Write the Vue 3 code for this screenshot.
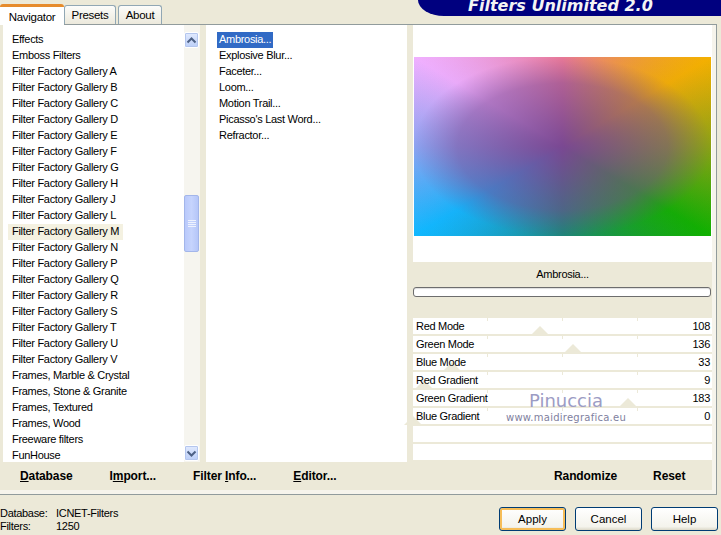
<script setup>
const filterCategories = [
  'Effects', 'Emboss Filters', 'Filter Factory Gallery A', 'Filter Factory Gallery B',
  'Filter Factory Gallery C', 'Filter Factory Gallery D', 'Filter Factory Gallery E',
  'Filter Factory Gallery F', 'Filter Factory Gallery G', 'Filter Factory Gallery H',
  'Filter Factory Gallery J', 'Filter Factory Gallery L', 'Filter Factory Gallery M',
  'Filter Factory Gallery N', 'Filter Factory Gallery P', 'Filter Factory Gallery Q',
  'Filter Factory Gallery R', 'Filter Factory Gallery S', 'Filter Factory Gallery T',
  'Filter Factory Gallery U', 'Filter Factory Gallery V', 'Frames, Marble & Crystal',
  'Frames, Stone & Granite', 'Frames, Textured', 'Frames, Wood', 'Freeware filters', 'FunHouse'
]
const filters = ['Ambrosia...', 'Explosive Blur...', 'Faceter...', 'Loom...', 'Motion Trail...', "Picasso's Last Word...", 'Refractor...']
const sliders = [
  { name: 'Red Mode', value: 108 },
  { name: 'Green Mode', value: 136 },
  { name: 'Blue Mode', value: 33 },
  { name: 'Red Gradient', value: 9 },
  { name: 'Green Gradient', value: 183 },
  { name: 'Blue Gradient', value: 0 }
]
const thumbLeft = (value) => `${value * 1.173 - 7}px`
</script>

<template>
  <div class="dialog">
    <header class="top">
      <div class="tabs">
        <div class="tab tab--active">Navigator</div>
        <div class="tab">Presets</div>
        <div class="tab">About</div>
      </div>
      <div class="brand">Filters Unlimited 2.0</div>
    </header>

    <section class="panel">
      <div class="columns">
        <div class="category-col">
          <ul class="list">
            <li v-for="item in filterCategories" :key="item" :class="['row', { 'row--current': item === 'Filter Factory Gallery M' }]">
              <span>{{ item }}</span>
            </li>
          </ul>
          <div class="scrollbar">
            <div class="arrow">
              <svg width="11" height="9" viewBox="0 0 11 9"><path d="M1.5 6.5 5.5 2.5 9.5 6.5" fill="none" stroke="#4d6185" stroke-width="2" /></svg>
            </div>
            <div class="scroll-track">
              <div class="scroll-thumb"><i></i><i></i><i></i><i></i></div>
            </div>
            <div class="arrow">
              <svg width="11" height="9" viewBox="0 0 11 9"><path d="M1.5 2.5 5.5 6.5 9.5 2.5" fill="none" stroke="#4d6185" stroke-width="2" /></svg>
            </div>
          </div>
        </div>
        <ul class="list filter-col">
          <li v-for="(item, index) in filters" :key="item" class="row">
            <span :class="{ selected: index === 0 }">{{ item }}</span>
          </li>
        </ul>
        <div class="preview-col">
          <div class="preview-gap"></div>
          <div class="preview"></div>
          <div class="preview-foot"></div>
          <div class="caption">
            <div class="caption-name">Ambrosia...</div>
            <div class="progress"></div>
          </div>
          <div class="sliders">
            <div v-for="slider in sliders" :key="slider.name" class="slider">
              <span>{{ slider.name }}</span>
              <span>{{ slider.value }}</span>
              <i class="tick tick-1"></i><i class="tick tick-2"></i><i class="tick tick-3"></i>
              <i class="thumb" :style="{ left: thumbLeft(slider.value) }"></i>
            </div>
            <div class="slider"></div>
            <div class="slider"></div>
            <div class="watermark">
              <div class="watermark-name">Pinuccia</div>
              <div class="watermark-url">www.maidiregrafica.eu</div>
            </div>
          </div>
        </div>
      </div>
      <div class="actions">
        <div class="actions-left">
          <span><u>D</u>atabase</span>
          <span>I<u>m</u>port...</span>
          <span>Filter <u>I</u>nfo...</span>
          <span><u>E</u>ditor...</span>
        </div>
        <div class="actions-right">
          <span>Randomize</span>
          <span>Reset</span>
        </div>
      </div>
    </section>

    <footer class="footer">
      <div class="status">
        <div><span class="status-key">Database:</span>ICNET-Filters</div>
        <div><span class="status-key">Filters:</span>1250</div>
      </div>
      <div class="buttons">
        <button class="btn btn--default" type="button">Apply</button>
        <button class="btn" type="button">Cancel</button>
        <button class="btn" type="button">Help</button>
      </div>
    </footer>
  </div>
</template>

<style scoped>
.dialog {
  width: 721px;
  height: 535px;
  overflow: hidden;
  color: #000;
  background: #ece9d8;
  font-family: "Liberation Sans", Arial, sans-serif;
  font-size: 11px;
  letter-spacing: -0.3px;
}
.top {
  display: flex;
  justify-content: space-between;
  height: 24px;
}
.tabs {
  display: flex;
  align-items: flex-end;
}
.tab {
  width: 50px;
  height: 18px;
  margin-right: 2px;
  line-height: 18px;
  text-align: center;
  font-size: 11.5px;
  background: linear-gradient(#fcfcfa, #ece9dc);
  border: 1px solid #91a7b4;
  border-bottom: none;
  border-radius: 3px 3px 0 0;
}
.tab:nth-child(3) { width: 42px; margin-right: 0; }
.tab--active {
  position: relative;
  z-index: 1;
  width: 64px;
  height: 18px;
  margin: 0 0 -1px;
  line-height: 20px;
  background: #fff;
  border: none;
  border-top: 3px solid #e68b2c;
}
.brand {
  width: 303px;
  height: 16px;
  padding-left: 50px;
  box-sizing: border-box;
  color: #f4f4f4;
  background: #00007f;
  border-bottom-left-radius: 26px 16px;
  font-family: "DejaVu Sans", sans-serif;
  font-size: 16px;
  font-weight: 700;
  font-style: italic;
  line-height: 12px;
  letter-spacing: 0;
  white-space: nowrap;
}
.panel {
  display: flex;
  flex-direction: column;
  width: 717px;
  height: 471px;
  box-sizing: border-box;
  padding: 0 4px 4px 0;
  background: #f6f4ec;
  border: 1px solid #919b9c;
  border-left: none;
}
.columns {
  display: flex;
  height: 437px;
  background: #ece9d8;
}
.category-col {
  display: flex;
  width: 197px;
  margin-left: 3px;
  flex: none;
  background: #fff;
}
.list {
  flex: 1;
  margin: 0;
  padding: 7px 0 0;
  overflow: hidden;
  list-style: none;
  background: #fff;
}
.row {
  height: 16px;
  padding-left: 9px;
  line-height: 15px;
  white-space: nowrap;
}
.row--current {
  width: 111px;
  margin-left: 5px;
  padding-left: 4px;
  background: #f4f1e1;
}
.scrollbar {
  display: flex;
  flex-direction: column;
  width: 16px;
  flex: none;
  padding: 7px 0 1px;
  background: #f6f5ef;
  box-sizing: border-box;
}
.arrow {
  display: flex;
  align-items: center;
  justify-content: center;
  flex: none;
  width: 15px;
  height: 16px;
  background: linear-gradient(#e1eafe, #bccff8);
  border: 1px solid #fff;
  border-radius: 2px;
  box-sizing: border-box;
  box-shadow: 0 0 0 1px #b4c6ee inset;
}
.scroll-track {
  flex: 1;
  padding-top: 147px;
}
.scroll-thumb {
  display: flex;
  flex-direction: column;
  align-items: center;
  justify-content: center;
  gap: 1px;
  width: 15px;
  height: 57px;
  background: linear-gradient(90deg, #b9c9fb, #c6d4fd 50%, #b5c6f8);
  border: 1px solid #a3b6ea;
  border-radius: 2px;
  box-sizing: border-box;
}
.scroll-thumb i {
  display: block;
  width: 8px;
  height: 1px;
  background: #eef2fe;
}
.filter-col {
  flex: none;
  width: 201px;
  margin-left: 6px;
}
.filter-col .row {
  padding-left: 13px;
}
.selected {
  display: inline-block;
  height: 16px;
  margin-left: -2px;
  padding: 0 2px;
  color: #fff;
  background: #316ac5;
}
.preview-col {
  display: flex;
  flex-direction: column;
  flex: none;
  width: 305px;
  padding-left: 7px;
  box-sizing: border-box;
  background: linear-gradient(90deg, #ece9d8 6px, #fff 6px);
}
.preview-gap {
  height: 32px;
}
.preview {
  width: 297px;
  height: 180px;
  background-image:
    radial-gradient(ellipse farthest-corner at 50% 50%, rgb(122, 72, 146) 0%, rgba(122, 72, 146, 0.55) 50%, rgba(122, 72, 146, 0.06) 71%, rgba(122, 72, 146, 0) 100%),
    conic-gradient(from 0deg at 50% 50%, #f07c98 0deg, #f4b000 59deg, #8ca80c 90deg, #10b000 121deg, #188878 180deg, #10b8ff 239deg, #8eaaf8 270deg, #f0b0ff 301deg, #f07c98 360deg);
}
.preview-foot {
  height: 27px;
}
.caption {
  width: 299px;
  height: 56px;
  margin-left: -1px;
  background: #ece9d8;
}
.caption-name {
  height: 25px;
  line-height: 24px;
  text-align: center;
}
.progress {
  width: 298px;
  height: 10px;
  box-sizing: border-box;
  background: #fff;
  border: 1px solid #6d6d6d;
  border-radius: 3px;
  box-shadow: inset 0 1px 1px #ddd;
}
.sliders {
  position: relative;
  width: 299px;
  margin-left: -1px;
}
.slider {
  position: relative;
  display: flex;
  justify-content: space-between;
  height: 18px;
  box-sizing: border-box;
  padding: 0 2px 0 3px;
  line-height: 16px;
  border-bottom: 2px solid #ece9d8;
}
.slider span {
  position: relative;
  z-index: 1;
}
.tick {
  position: absolute;
  top: 0;
  width: 1px;
  height: 3px;
  background: #ece9d8;
}
.tick-1 { left: 74px; }
.tick-2 { left: 149px; }
.tick-3 { left: 224px; }
.thumb {
  position: absolute;
  bottom: -1px;
  width: 0;
  height: 0;
  border-right: 9px solid transparent;
  border-bottom: 9px solid #ece9d8;
  border-left: 9px solid transparent;
  transform: translateX(-2px);
}
.watermark {
  position: absolute;
  top: 73px;
  left: 92px;
  width: 122px;
  color: #9c9cc4;
  font-family: "DejaVu Sans", sans-serif;
  letter-spacing: 0;
  text-align: center;
}
.watermark-name {
  font-size: 18px;
  line-height: 20px;
}
.watermark-url {
  font-size: 10px;
  line-height: 14px;
  letter-spacing: 0.25px;
  white-space: nowrap;
  color: #7f7fa0;
}
.actions {
  display: flex;
  align-items: center;
  height: 28px;
  background: #ece9d8;
  font-weight: 700;
  font-size: 12px;
  letter-spacing: -0.1px;
}
.actions-left {
  display: flex;
  flex: none;
  width: 412px;
  padding-left: 20px;
  box-sizing: border-box;
}
.actions-left span + span { margin-left: 37px; }
.actions-right {
  display: flex;
  gap: 36px;
  margin-left: 142px;
}
.footer {
  display: flex;
  justify-content: space-between;
  height: 40px;
}
.status {
  padding-top: 12px;
  line-height: 13px;
}
.status-key {
  display: inline-block;
  width: 56px;
}
.buttons {
  display: flex;
  gap: 9px;
  padding: 12px 3px 0 0;
}
.btn {
  width: 67px;
  height: 24px;
  padding: 0;
  color: #000;
  background: linear-gradient(#fff, #f4f3ec 85%, #dcd8c8);
  border: 1px solid #003c74;
  border-radius: 3px;
  font: inherit;
  font-size: 11.5px;
}
.btn--default {
  box-shadow: inset 0 0 0 2px #f6bd58;
}
</style>
